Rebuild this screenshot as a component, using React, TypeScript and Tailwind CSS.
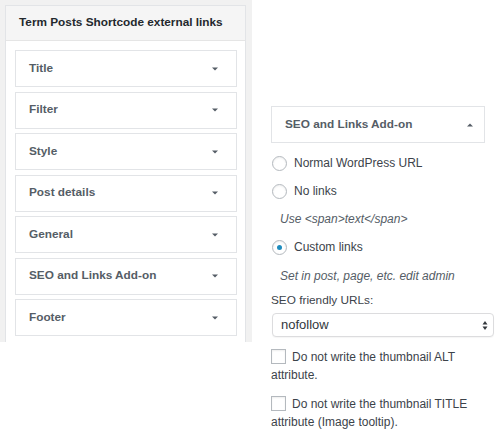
import React from "react";

const font = { fontFamily: '"Liberation Sans", Arial, sans-serif' };

function Down() {
  return (
    <svg width="6" height="4" viewBox="0 0 6 4" className="block">
      <path d="M0 0.5 L6 0.5 L3 3.5 Z" fill="#555d66" />
    </svg>
  );
}
function Up() {
  return (
    <svg width="6" height="4" viewBox="0 0 6 4" className="block">
      <path d="M0 3.5 L6 3.5 L3 0.5 Z" fill="#555d66" />
    </svg>
  );
}

function Section({ label }: { label: string }) {
  return (
    <div className="h-[37px] border border-[#e2e4e7] bg-white flex items-center justify-between pl-[13px] pr-[18px]">
      <span className="text-[11.8px] font-bold text-[#555d66]">{label}</span>
      <Down />
    </div>
  );
}

function Radio({ checked, label }: { checked?: boolean; label: string }) {
  return (
    <div className="h-[28px] flex items-center">
      <span className="w-[15px] h-[15px] rounded-full border border-[#b4b9be] bg-white flex items-center justify-center ml-[1px] shadow-[inset_0_1px_2px_rgba(0,0,0,0.07)]">
        {checked && <span className="w-[5px] h-[5px] rounded-full bg-[#1e8cbe]" />}
      </span>
      <span className="ml-[7px] text-[12px] text-[#3c434a]">{label}</span>
    </div>
  );
}

function Check({ text }: { text: string }) {
  return (
    <p className="text-[12px] leading-[18px] text-[#3c434a]">
      <span className="inline-block w-[15px] h-[15px] border border-[#b4b9be] bg-white align-[-3px] mr-[6px] shadow-[inset_0_1px_2px_rgba(0,0,0,0.07)]" />
      {text}
    </p>
  );
}

export default function App() {
  return (
    <div className="w-[500px] h-[447px] bg-white flex items-start overflow-hidden" style={font}>
      <div className="w-[252px] h-[342px] bg-[#f1f1f1] pl-[5px] pt-[5px] pr-[6px] overflow-hidden shrink-0">
        <div className="border border-[#e2e4e7] bg-white h-[400px]">
          <div className="h-[35px] bg-[#f5f5f5] border-b border-[#e5e5e5] flex items-center pl-[13px]">
            <span className="text-[11.8px] font-bold text-[#23282d]">Term Posts Shortcode external links</span>
          </div>
          <div className="pt-[9px] pl-[9px] pr-[8px] flex flex-col gap-[4.5px]">
            <Section label="Title" />
            <Section label="Filter" />
            <Section label="Style" />
            <Section label="Post details" />
            <Section label="General" />
            <Section label="SEO and Links Add-on" />
            <Section label="Footer" />
          </div>
        </div>
      </div>
      <div className="flex-1 pt-[106px] pl-[19px] pr-[6px]">
        <div className="w-[214px] h-[37px] border border-[#e2e4e7] flex items-center justify-between pl-[13px] pr-[11px]">
          <span className="text-[11.8px] font-bold text-[#555d66]">SEO and Links Add-on</span>
          <Up />
        </div>
        <div className="pt-[6px]">
          <Radio label="Normal WordPress URL" />
          <Radio label="No links" />
          <div className="h-[28px] flex items-center pl-[9px]">
            <span className="text-[12px] italic text-[#555d66]">Use &lt;span&gt;text&lt;/span&gt;</span>
          </div>
          <Radio checked label="Custom links" />
          <div className="h-[30px] flex items-center pl-[9px]">
            <span className="text-[12px] italic text-[#555d66]">Set in post, page, etc. edit admin</span>
          </div>
          <div className="h-[20px] flex items-center">
            <span className="text-[11.8px] text-[#3c434a]">SEO friendly URLs:</span>
          </div>
          <div className="mt-[2px] ml-[1px] h-[24px] border border-[#dcdcde] rounded-[4px] bg-white flex items-center justify-between pl-[8px] pr-[5px] shadow-[0_1px_1px_rgba(0,0,0,0.04)]">
            <span className="text-[13px] text-[#32373c]">nofollow</span>
            <svg width="6" height="11" viewBox="0 0 6 11" className="block">
              <path d="M0.5 4.5 L5.5 4.5 L3 1 Z" fill="#32373c" />
              <path d="M0.5 6.5 L5.5 6.5 L3 10 Z" fill="#32373c" />
            </svg>
          </div>
          <div className="mt-[11px]">
            <Check text="Do not write the thumbnail ALT attribute." />
          </div>
          <div className="mt-[11px]">
            <Check text="Do not write the thumbnail TITLE attribute (Image tooltip)." />
          </div>
        </div>
      </div>
    </div>
  );
}
